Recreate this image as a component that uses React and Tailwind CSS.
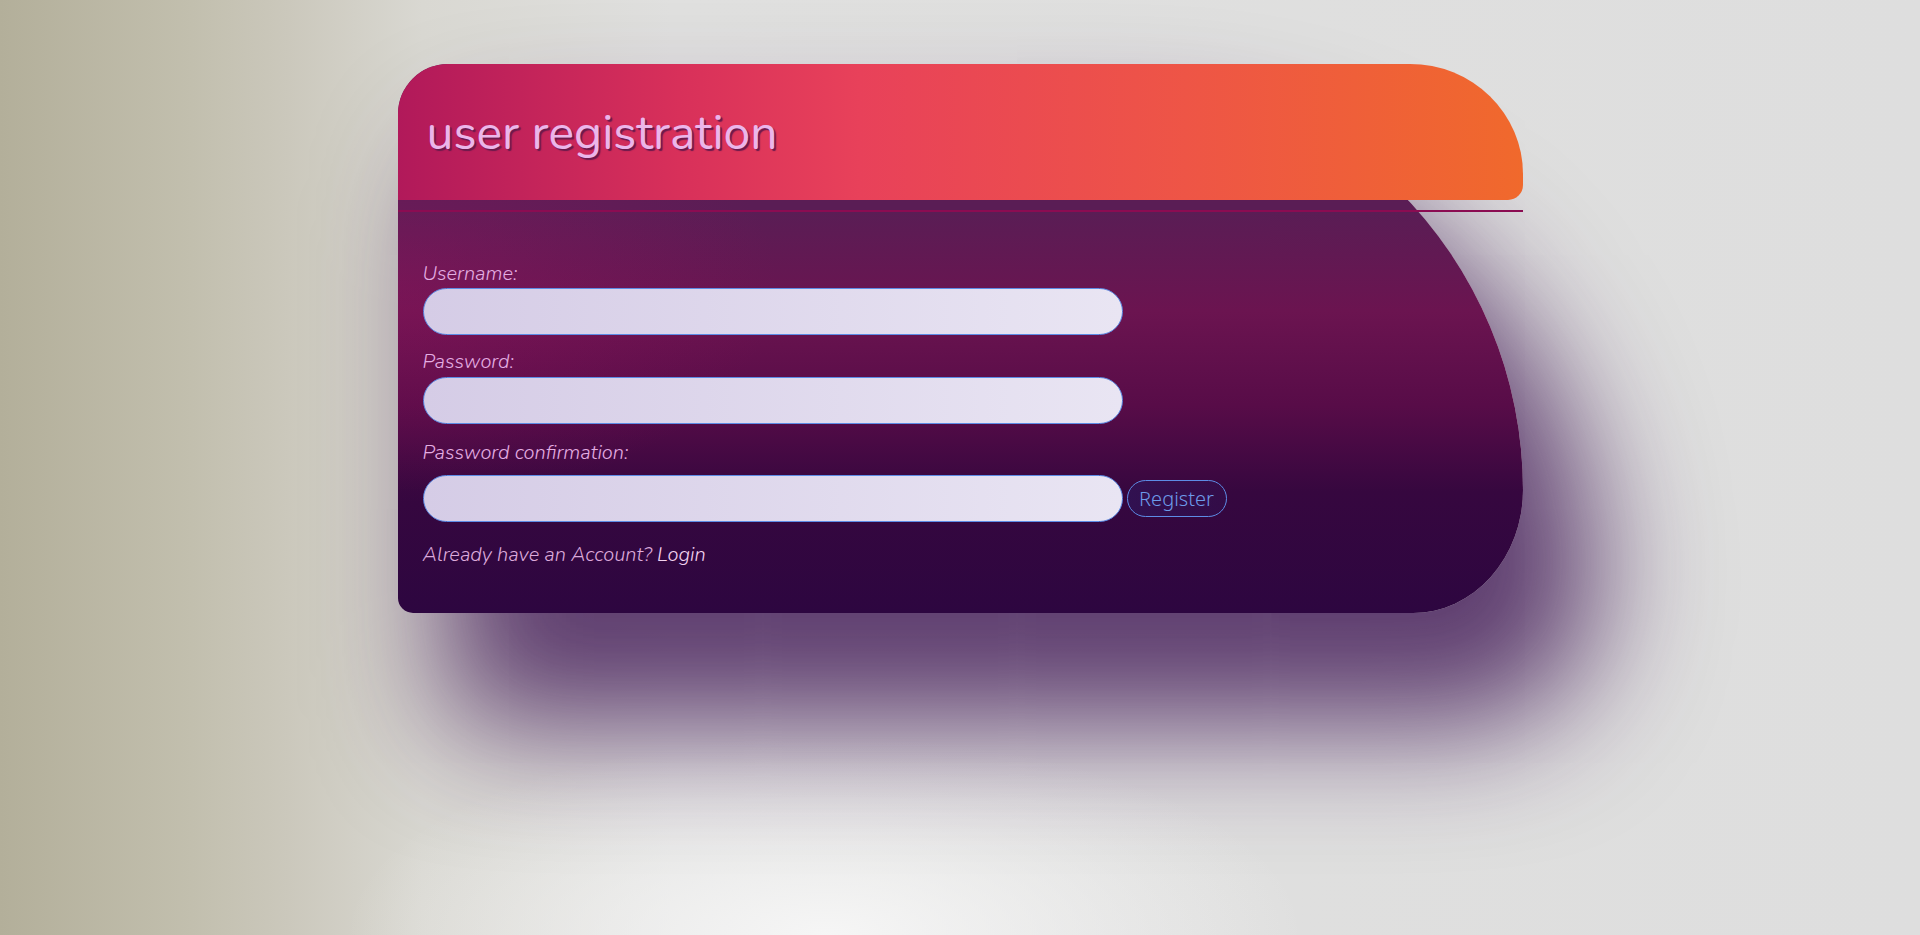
import React from "react";

const App = () => {
  return (
    <div className="h-screen w-full overflow-hidden pt-16 bg-[image:radial-gradient(ellipse_480px_200px_at_43%_100%,rgba(248,248,248,0.9),rgba(248,248,248,0)),linear-gradient(to_right,#b3af9a_0%,#c2bfae_10%,#cbc8bc_15%,#d9d8d2_22%,#e0e0df_35%,#dedede_100%)]">
      <div className="relative mx-auto w-[1125px] h-[549px] rounded-[50px_430px_110px_15px/50px_426px_123px_15px] shadow-[60px_100px_125px_12px_rgba(58,16,80,0.78)] bg-[image:radial-gradient(ellipse_380px_220px_at_0%_40%,rgba(150,20,95,0.35),rgba(150,20,95,0)),linear-gradient(to_bottom,#5a1d55_0%,#5a1d55_27%,#6b1450_45%,#580c48_62%,#36073f_78%,#2d0640_100%)]">
        {/* header */}
        <header className="h-[136px] pl-[29px] pt-[45px] rounded-[50px_113px_15px_0/50px_110px_15px_0] bg-[linear-gradient(to_right,#b1195a_0%,#d8305a_25%,#e8415a_41%,#ee5546_70%,#f0692c_100%)]">
          <h1 className="font-['Nunito','Noto_Sans',sans-serif] text-[48px] leading-none text-[#ebb6ea] [text-shadow:2px_2px_1px_#6b1a4c]">
            user registration
          </h1>
        </header>

        {/* divider */}
        <div className="mt-[10px] h-[2px] bg-[#8b0c52]"></div>

        {/* form */}
        <form className="pl-[25px] pt-[50px] font-['Nunito','Lato',sans-serif] italic font-light text-[20px] leading-6 text-[#e4ade2]">
          <label className="block">Username:</label>
          <input
            type="text"
            className="mt-[2px] block w-[700px] h-[47px] rounded-full border-[1.5px] border-[#5d8ce6] bg-[linear-gradient(to_right,#d5cce6,#e9e5f3)] outline-none px-5"
          />
          <label className="block mt-[15px]">Password:</label>
          <input
            type="password"
            className="mt-[3px] block w-[700px] h-[47px] rounded-full border-[1.5px] border-[#5d8ce6] bg-[linear-gradient(to_right,#d5cce6,#e9e5f3)] outline-none px-5"
          />
          <label className="block mt-[17px]">Password confirmation:</label>
          <div className="mt-[10px] flex items-center gap-[4px]">
            <input
              type="password"
              className="block w-[700px] h-[47px] rounded-full border-[1.5px] border-[#5d8ce6] bg-[linear-gradient(to_right,#d5cce6,#e9e5f3)] outline-none px-5"
            />
            <button
              type="button"
              className="w-[100px] h-[37px] rounded-full border border-[#5d8ce6] bg-[linear-gradient(to_right,rgba(45,25,95,0.55),rgba(45,25,95,0.25))] font-['Noto_Sans',sans-serif] not-italic font-light text-[20px] leading-none text-[#6d9bea]"
            >
              Register
            </button>
          </div>
          <p className="mt-[21px] text-[#dcaadb]">
            Already have an Account? <a className="text-[#f3d3f1]">Login</a>
          </p>
        </form>
      </div>
    </div>
  );
};

export default App;
